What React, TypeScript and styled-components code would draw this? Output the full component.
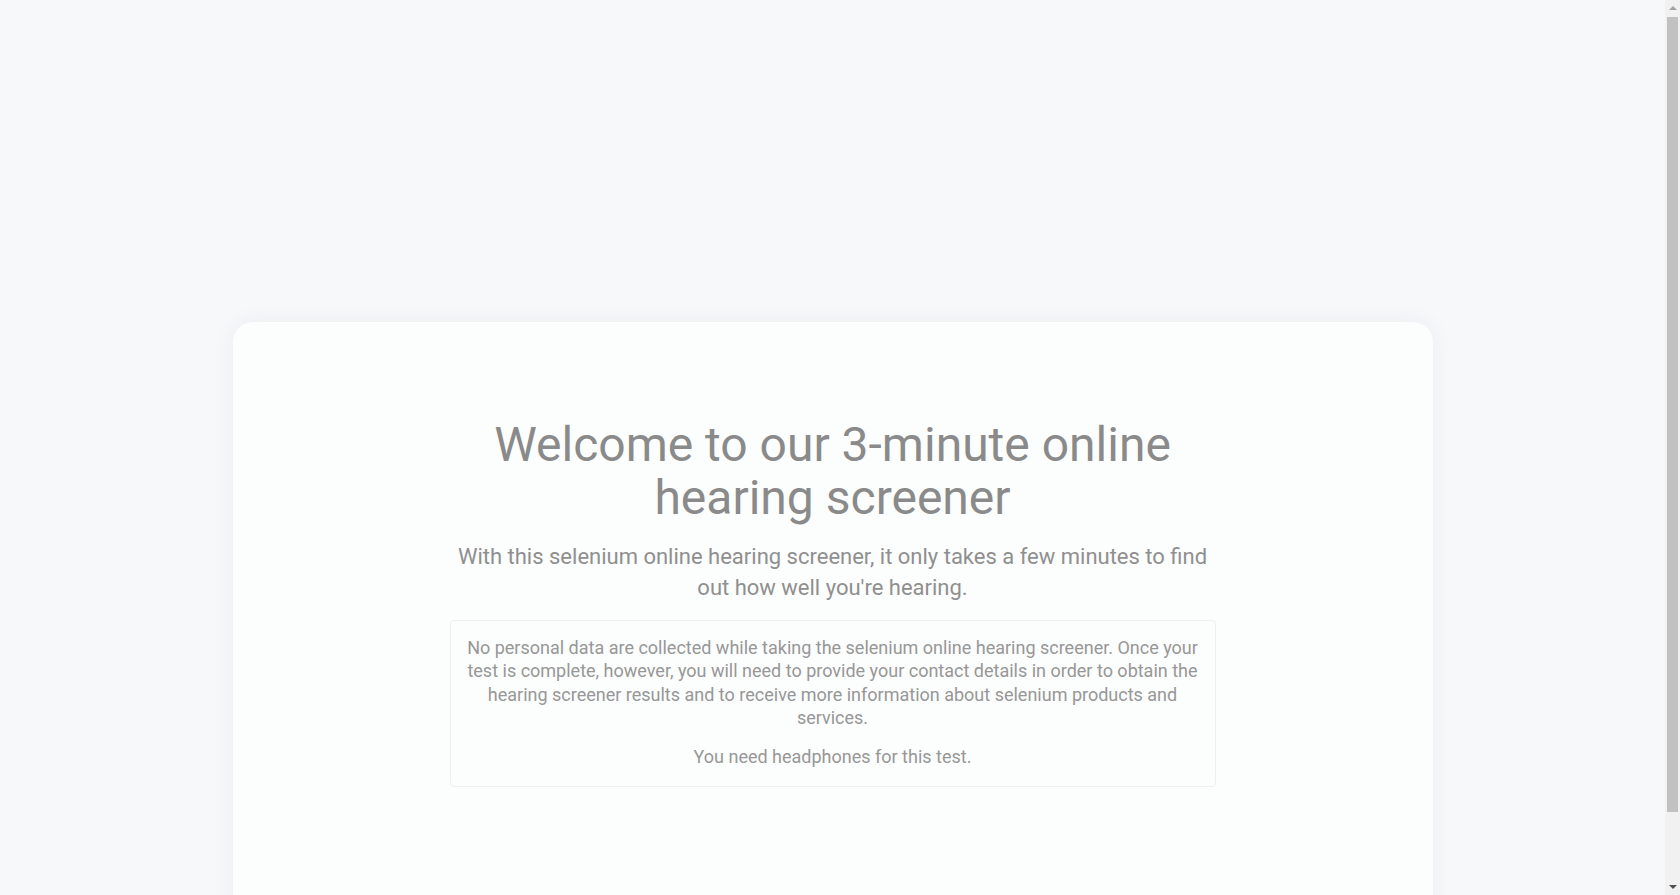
import React from "react";
import styled, { createGlobalStyle } from "styled-components";

const GlobalStyle = createGlobalStyle`
  html, body {
    margin: 0;
    padding: 0;
    height: 100%;
    overflow: hidden;
    background: #f7f8fa;
    font-family: Roboto, "Noto Sans", "Liberation Sans", sans-serif;
  }
  * { box-sizing: border-box; }
`;

const Frame = styled.div`
  display: flex;
  height: 100vh;
  width: 100%;
`;

const Viewport = styled.div`
  flex: 1;
  min-width: 0;
  overflow-y: auto;
  background: #f7f8fa;
  scrollbar-width: none;
  &::-webkit-scrollbar { display: none; }
`;

const ScrollRail = styled.div`
  width: 15px;
  flex: 0 0 15px;
  display: flex;
  flex-direction: column;
  background: #f1f1f1;
`;

const ArrowButton = styled.div`
  height: 17px;
  flex: 0 0 17px;
  display: flex;
  align-items: center;
  justify-content: center;
`;

const Arrow = styled.span<{ $dir: "up" | "down" }>`
  width: 0;
  height: 0;
  border-left: 4px solid transparent;
  border-right: 4px solid transparent;
  ${(p) =>
    p.$dir === "up"
      ? "border-bottom: 4px solid #a3a3a3; margin-top: -1px;"
      : "border-top: 4px solid #505050; margin-top: 1px;"}
`;

const Track = styled.div`
  flex: 1;
  padding: 0 2px;
`;

const Thumb = styled.div`
  height: 795px;
  background: #c1c1c1;
`;

const Page = styled.main`
  min-height: 970px;
  padding-top: 322px;
  display: flex;
  justify-content: center;
  align-items: flex-start;
`;

const Card = styled.section`
  width: 1200px;
  min-height: 648px;
  background: #fcfdfd;
  border-radius: 20px 20px 0 0;
  box-shadow: 0 0 22px rgba(40, 50, 70, 0.06);
  display: flex;
  justify-content: center;
  padding-top: 96px;
`;

const Content = styled.div`
  width: 766px;
  display: flex;
  flex-direction: column;
  align-items: center;
  text-align: center;
  color: #8c8c8c;
`;

const Title = styled.h1`
  margin: 0;
  font-size: 48px;
  line-height: 53px;
  font-weight: 400;
  color: #8a8a8a;
`;

const Subtitle = styled.p`
  margin: 17px 0 0;
  font-size: 22px;
  line-height: 31px;
  font-weight: 400;
  color: #8f8f8f;
`;

const InfoBox = styled.div`
  margin-top: 17px;
  width: 100%;
  border: 1px solid #eeefef;
  border-radius: 4px;
  padding: 15px 16px 18px;
  display: flex;
  flex-direction: column;
  gap: 16px;
`;

const InfoText = styled.p`
  margin: 0;
  font-size: 18px;
  line-height: 23.3px;
  color: #979797;
`;

export default function App() {
  return (
    <>
      <GlobalStyle />
      <Frame>
        <Viewport>
          <Page>
            <Card>
              <Content>
                <Title>Welcome to our 3-minute online hearing screener</Title>
                <Subtitle>
                  With this selenium online hearing screener, it only takes a few minutes to find out how well you're hearing.
                </Subtitle>
                <InfoBox>
                  <InfoText>
                    No personal data are collected while taking the selenium online hearing screener. Once your test is complete, however, you will need to provide your contact details in order to obtain the hearing screener results and to receive more information about selenium products and services.
                  </InfoText>
                  <InfoText>You need headphones for this test.</InfoText>
                </InfoBox>
              </Content>
            </Card>
          </Page>
        </Viewport>
        <ScrollRail aria-hidden="true">
          <ArrowButton>
            <Arrow $dir="up" />
          </ArrowButton>
          <Track>
            <Thumb />
          </Track>
          <ArrowButton>
            <Arrow $dir="down" />
          </ArrowButton>
        </ScrollRail>
      </Frame>
    </>
  );
}
